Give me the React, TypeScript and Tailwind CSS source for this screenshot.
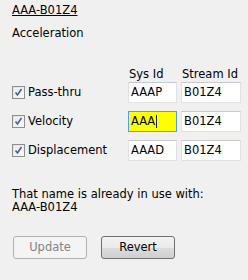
import React from 'react';

const font = { fontFamily: '"DejaVu Sans", Verdana, sans-serif' };

// Windows 7 style checkbox, always checked here
function CheckBox() {
  return (
    <div className="w-[13px] h-[13px] border border-[#8f8f8f] bg-gradient-to-br from-[#dcdcdc] to-[#fbfbfb] p-[1px] shrink-0">
      <div className="w-full h-full border border-[#f4f4f4] bg-gradient-to-br from-[#e6e6e6] to-[#fdfdfd] relative">
        <svg viewBox="0 0 9 9" className="absolute -left-[1px] -top-[1px] w-[9px] h-[9px]">
          <path d="M1.5 4.5 L3.5 7 L7.5 1" fill="none" stroke="#4a5f97" strokeWidth="1.6" />
        </svg>
      </div>
    </div>
  );
}

function TextBox({ value, focused = false }: { value: string; focused?: boolean }) {
  return (
    <div
      className={
        focused
          ? 'h-[21px] border border-[#569de5] bg-[#ffff00] pl-[2px] flex items-center'
          : 'h-[21px] border border-[#dfe1e6] border-t-[#c7cad1] bg-white pl-[2px] flex items-center'
      }
    >
      <span>{value}</span>
      {focused && <span className="w-[1px] h-[13px] bg-[#1a1a6e] ml-[1px]" />}
    </div>
  );
}

const rows = [
  { label: 'Pass-thru', sys: 'AAAP', stream: 'B01Z4' },
  { label: 'Velocity', sys: 'AAA', stream: 'B01Z4', focused: true },
  { label: 'Displacement', sys: 'AAAD', stream: 'B01Z4' },
];

export default function App() {
  return (
    <div
      className="w-[248px] h-[280px] bg-[#f0f0f0] pl-[12px] pt-[4px] text-[11.5px] leading-[13px] text-black overflow-hidden"
      style={font}
    >
      <div className="underline">AAA-B01Z4</div>
      <div className="mt-[10px]">Acceleration</div>

      {/* channel grid */}
      <div className="mt-[28px] grid grid-cols-[112px_49px_60px] gap-x-[4px]">
        <div />
        <div className="pl-[1px]">Sys Id</div>
        <div className="pl-[1px]">Stream Id</div>
      </div>
      <div className="mt-[1px] flex flex-col gap-[8px]">
        {rows.map((r) => (
          <div key={r.label} className="grid grid-cols-[112px_49px_60px] gap-x-[4px] items-center">
            <div className="flex items-center gap-[3px]">
              <CheckBox />
              <span>{r.label}</span>
            </div>
            <TextBox value={r.sys} focused={r.focused} />
            <TextBox value={r.stream} />
          </div>
        ))}
      </div>

      <div className="mt-[27px]">
        <div>That name is already in use with:</div>
        <div>AAA-B01Z4</div>
      </div>

      <div className="mt-[22px] ml-[1px] flex gap-[14px]">
        <button
          disabled
          className="w-[74px] h-[23px] border border-[#adb2b5] rounded-[3px] bg-[#f4f4f4] text-[#838383] flex items-center justify-center"
        >
          Update
        </button>
        <button className="w-[74px] h-[23px] border border-[#707070] rounded-[3px] bg-[linear-gradient(#f2f2f2_0%,#ebebeb_50%,#dddddd_51%,#cfcfcf_100%)] text-black flex items-center justify-center">
          Revert
        </button>
      </div>
    </div>
  );
}
